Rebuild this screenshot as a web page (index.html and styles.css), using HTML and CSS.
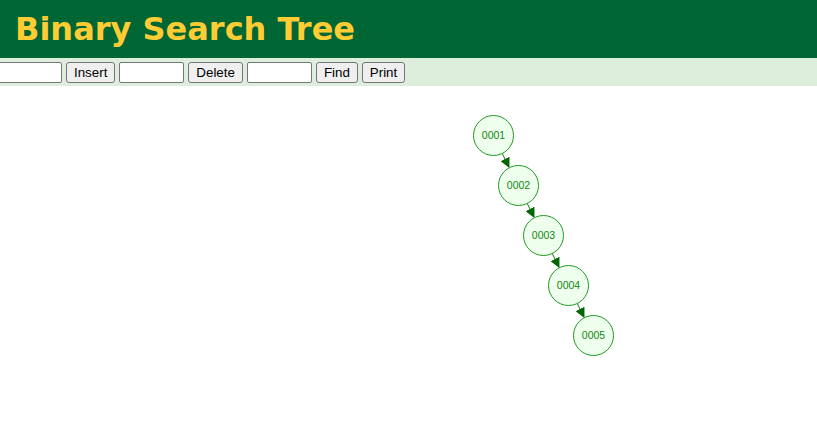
FILE: index.html
```html
<!DOCTYPE html>
<html>
<head>
<meta charset="utf-8">
<title>Binary Search Tree</title>
<link rel="stylesheet" href="styles.css">
</head>
<body>
<header class="header">
  <h1 class="title">Binary Search Tree</h1>
</header>
<div class="toolbar">
  <input class="field first" type="text">
  <button class="btn">Insert</button>
  <input class="field" type="text">
  <button class="btn">Delete</button>
  <input class="field" type="text">
  <button class="btn">Find</button>
  <button class="btn">Print</button>
</div>
<div class="canvas">
  <svg class="tree" width="817" height="345" viewBox="0 86 817 345" xmlns="http://www.w3.org/2000/svg">
    <defs>
      <marker id="arrow" markerWidth="10" markerHeight="10" refX="9" refY="5" orient="auto" markerUnits="userSpaceOnUse">
        <path d="M0,0 L10,5 L0,10 Z" class="arrowhead"/>
      </marker>
    </defs>
    <g class="edges">
      <line x1="502" y1="153" x2="509" y2="167" marker-end="url(#arrow)"/>
      <line x1="527" y1="203" x2="534" y2="217" marker-end="url(#arrow)"/>
      <line x1="552" y1="253" x2="559" y2="267" marker-end="url(#arrow)"/>
      <line x1="577" y1="303" x2="584" y2="317" marker-end="url(#arrow)"/>
    </g>
    <g class="nodes">
      <circle cx="493.5" cy="135.5" r="20"/>
      <text x="493.5" y="139">0001</text>
      <circle cx="518.5" cy="185.5" r="20"/>
      <text x="518.5" y="189">0002</text>
      <circle cx="543.5" cy="235.5" r="20"/>
      <text x="543.5" y="239">0003</text>
      <circle cx="568.5" cy="285.5" r="20"/>
      <text x="568.5" y="289">0004</text>
      <circle cx="593.5" cy="335.5" r="20"/>
      <text x="593.5" y="339">0005</text>
    </g>
  </svg>
</div>
</body>
</html>
```
FILE: styles.css
```css
html, body {
  margin: 0;
  padding: 0;
  background: #ffffff;
  overflow: hidden;
}
.header {
  background: #006633;
  height: 58px;
  display: flex;
  align-items: center;
  padding-left: 15px;
  box-sizing: border-box;
}
.title {
  margin: 0;
  font-family: Verdana, "DejaVu Sans", sans-serif;
  font-weight: bold;
  font-size: 32px;
  color: #ffcc33;
  line-height: 1;
}
.toolbar {
  background: #ddeedd;
  height: 28px;
  display: flex;
  align-items: center;
  gap: 4px;
  margin-left: -3px;
  white-space: nowrap;
}
.field {
  box-sizing: border-box;
  width: 65px;
  height: 21px;
  border: 1px solid #767676;
  border-radius: 2px;
  background: #fff;
  padding: 1px 2px;
  margin: 0;
  font-family: Arial, "Liberation Sans", sans-serif;
  font-size: 13.33px;
}
.btn {
  box-sizing: border-box;
  height: 21px;
  border: 1px solid #767676;
  border-radius: 3px;
  background: #efefef;
  padding: 1px 7px;
  margin: 0;
  font-family: Arial, "Liberation Sans", sans-serif;
  font-size: 13.33px;
  color: #000;
}
.canvas {
  display: block;
}
.tree {
  display: block;
}
.edges line {
  stroke: #117711;
  stroke-width: 1;
}
.arrowhead {
  fill: #006600;
}
.nodes circle {
  fill: #eeffee;
  stroke: #229922;
  stroke-width: 1;
}
.nodes text {
  font-family: Arial, "Liberation Sans", sans-serif;
  font-size: 10.5px;
  fill: #118811;
  text-anchor: middle;
}
```
